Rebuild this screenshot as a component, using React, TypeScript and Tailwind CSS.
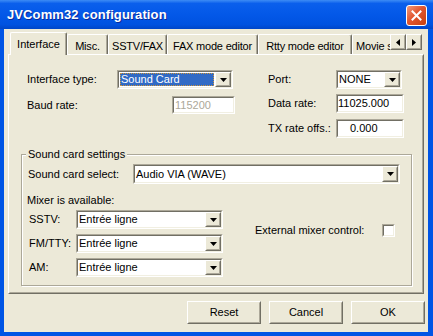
import React from 'react';

const raisedOuter = 'border border-t-white border-l-white border-b-[#716f64] border-r-[#716f64]';
const raisedInner = 'border border-t-[#ece9d8] border-l-[#ece9d8] border-b-[#aca899] border-r-[#aca899]';
const sunkenOuter = 'border border-t-[#aca899] border-l-[#aca899] border-b-white border-r-white';
const sunkenInner = 'border border-t-[#716f64] border-l-[#716f64] border-b-[#f1efe2] border-r-[#f1efe2]';

const Raised: React.FC<{ className?: string; children?: React.ReactNode }> = ({ className = '', children }) => (
  <div className={`${raisedOuter} bg-[#ece9d8] ${className}`}>
    <div className={`${raisedInner} w-full h-full flex items-center justify-center`}>{children}</div>
  </div>
);

const Sunken: React.FC<{ className?: string; children?: React.ReactNode }> = ({ className = '', children }) => (
  <div className={`${sunkenOuter} ${className}`}>
    <div className={`${sunkenInner} w-full h-full bg-white flex items-center`}>{children}</div>
  </div>
);

const DownArrow = () => (
  <svg width="7" height="4" viewBox="0 0 7 4">
    <polygon points="0,0 7,0 3.5,4" fill="#000" />
  </svg>
);

const Combo: React.FC<{ value: string; className: string; focused?: boolean }> = ({ value, className, focused }) => (
  <Sunken className={className}>
    <div className="flex-1 h-full flex items-center min-w-0">
      {focused ? (
        <div className="flex-1 h-[calc(100%-2px)] m-[1px] bg-[#316ac5] text-white border border-dotted border-[#ce953a] flex items-center">
          {value}
        </div>
      ) : (
        <span className="pl-[1px] whitespace-nowrap">{value}</span>
      )}
    </div>
    <Raised className="w-[16px] h-full">
      <DownArrow />
    </Raised>
  </Sunken>
);

const tabs = [
  { label: 'Interface', w: 'w-[57px]' },
  { label: 'Misc.', w: 'w-[41px]' },
  { label: 'SSTV/FAX', w: 'w-[59px]' },
  { label: 'FAX mode editor', w: 'w-[91px]' },
  { label: 'Rtty mode editor', w: 'w-[94px]' },
];

export default function App() {
  return (
    <div className="w-[433px] h-[336px] bg-[#0055e5] flex flex-col font-['Liberation_Sans',Arial,sans-serif] text-[11px] text-black overflow-hidden">
      {/* Title bar */}
      <div className="h-[29px] flex items-center bg-[linear-gradient(to_bottom,#3d8cf5_0%,#0a5fec_12%,#0358e8_50%,#0052e0_85%,#0046c8_100%)]">
        <span className="pl-[7px] text-white font-bold text-[13px] tracking-[0.1px] [text-shadow:1px_1px_0_#0b2a9a]">
          JVComm32 configuration
        </span>
        <div className="ml-auto mr-[6px] mt-[1px] w-[21px] h-[21px] rounded-[3px] border border-white bg-[linear-gradient(135deg,#f09a7c_0%,#e2562f_45%,#c7400f_100%)] flex items-center justify-center">
          <svg width="11" height="11" viewBox="0 0 11 11">
            <path d="M1.5 1.5 L9.5 9.5 M9.5 1.5 L1.5 9.5" stroke="#fff" strokeWidth="2" strokeLinecap="square" />
          </svg>
        </div>
      </div>

      {/* Body */}
      <div className="flex-1 ml-[4px] mr-[5px] mb-[4px] bg-[#ece9d8] flex flex-col">
        {/* Tabs */}
        <div className="mt-[3px] h-[23px] pl-[6px] pr-[6px] flex relative z-10">
          <div className="flex-1 flex items-start overflow-hidden">
            {tabs.map((t, i) =>
              i === 0 ? (
                <div
                  key={t.label}
                  className={`${t.w} shrink-0 h-[23px] bg-[#ece9d8] border-t border-l border-white border-r-[#716f64] border-r rounded-tl-[2px] rounded-tr-[2px] shadow-[inset_-1px_0_0_#aca899] flex justify-center pt-[5px] leading-[13px]`}
                >
                  {t.label}
                </div>
              ) : (
                <div
                  key={t.label}
                  className={`${t.w} shrink-0 mt-[2px] h-[20px] border-t border-l border-white border-r-[#716f64] border-r rounded-tl-[2px] rounded-tr-[2px] shadow-[inset_-1px_0_0_#aca899] flex justify-center pt-[5px] leading-[13px] whitespace-nowrap tracking-[-0.2px]`}
                >
                  {t.label}
                </div>
              )
            )}
            <div className="w-[38px] shrink-0 mt-[2px] h-[20px] border-t border-l border-white rounded-tl-[2px] flex pl-[3px] pt-[5px] leading-[13px] whitespace-nowrap tracking-[-0.2px]">
              Movie s
            </div>
          </div>
          <div className="flex mt-[2px] h-[16px]">
            <Raised className="w-[16px] h-[16px]">
              <svg width="4" height="7" viewBox="0 0 4 7">
                <polygon points="4,0 4,7 0,3.5" fill="#000" />
              </svg>
            </Raised>
            <Raised className="w-[16px] h-[16px]">
              <svg width="4" height="7" viewBox="0 0 4 7">
                <polygon points="0,0 0,7 4,3.5" fill="#000" />
              </svg>
            </Raised>
          </div>
        </div>

        {/* Tab panel */}
        <div className={`-mt-[1px] mx-[4px] h-[240px] ${raisedOuter}`}>
          <div className={`${raisedInner} w-full h-full flex flex-col pl-[11px] pt-[14px]`}>
            {/* Top section */}
            <div className="flex ml-[6px] h-[68px]">
              <div className="w-[208px] flex flex-col">
                <div className="flex items-center h-[19px]">
                  <span className="w-[90px]">Interface type:</span>
                  <Combo value="Sound Card" className="w-[116px] h-[19px]" focused />
                </div>
                <div className="flex items-center h-[18px] mt-[7px]">
                  <span className="flex-1">Baud rate:</span>
                  <Sunken className="w-[63px] h-[18px]">
                    <span className="pl-[1px] text-[#aca899]">115200</span>
                  </Sunken>
                </div>
              </div>
              <div className="ml-[33px] flex flex-col">
                <div className="flex items-center h-[19px]">
                  <span className="w-[68px]">Port:</span>
                  <Combo value="NONE" className="w-[66px] h-[19px]" />
                </div>
                <div className="flex items-center h-[19px] mt-[5px]">
                  <span className="w-[68px]">Data rate:</span>
                  <Sunken className="w-[68px] h-[19px]">
                    <span className="pl-[0px]">11025.000</span>
                  </Sunken>
                </div>
                <div className="flex items-center h-[19px] mt-[6px]">
                  <span className="w-[68px] whitespace-nowrap">TX rate offs.:</span>
                  <Sunken className="w-[68px] h-[19px]">
                    <span className="pl-[12px]">0.000</span>
                  </Sunken>
                </div>
              </div>
            </div>

            {/* Sound card settings group */}
            <div className="mt-[16px] w-[391px] h-[132px] relative border border-[#aca899] shadow-[inset_1px_1px_0_#fff,1px_1px_0_#fff] pl-[6px] pt-[9px] flex flex-col">
              <span className="absolute -top-[7px] left-[4px] px-[2px] bg-[#ece9d8] leading-[13px]">
                Sound card settings
              </span>
              <div className="flex items-center h-[20px]">
                <span className="w-[105px]">Sound card select:</span>
                <Combo value="Audio VIA (WAVE)" className="w-[267px] h-[20px]" />
              </div>
              <div className="mt-[10px] h-[13px] leading-[13px] -ml-[1px]">Mixer is available:</div>
              <div className="flex items-start mt-[3px]">
                <div className="flex flex-col gap-[5px]">
                  {['SSTV:', 'FM/TTY:', 'AM:'].map((l) => (
                    <div key={l} className="flex items-center h-[19px]">
                      <span className="w-[48px] pl-[1px]">{l}</span>
                      <Combo value="Entrée ligne" className="w-[147px] h-[19px]" />
                    </div>
                  ))}
                </div>
                <div className="ml-[32px] mt-[14px] flex items-center h-[13px]">
                  <span className="w-[127px]">External mixer control:</span>
                  <Sunken className="w-[13px] h-[13px]" />
                </div>
              </div>
            </div>
          </div>
        </div>

        {/* Buttons */}
        <div className="mt-[7px] flex justify-end gap-[8px] pr-[3px]">
          {['Reset', 'Cancel', 'OK'].map((b) => (
            <Raised key={b} className="w-[74px] h-[23px]">
              <span>{b}</span>
            </Raised>
          ))}
        </div>
      </div>
    </div>
  );
}
